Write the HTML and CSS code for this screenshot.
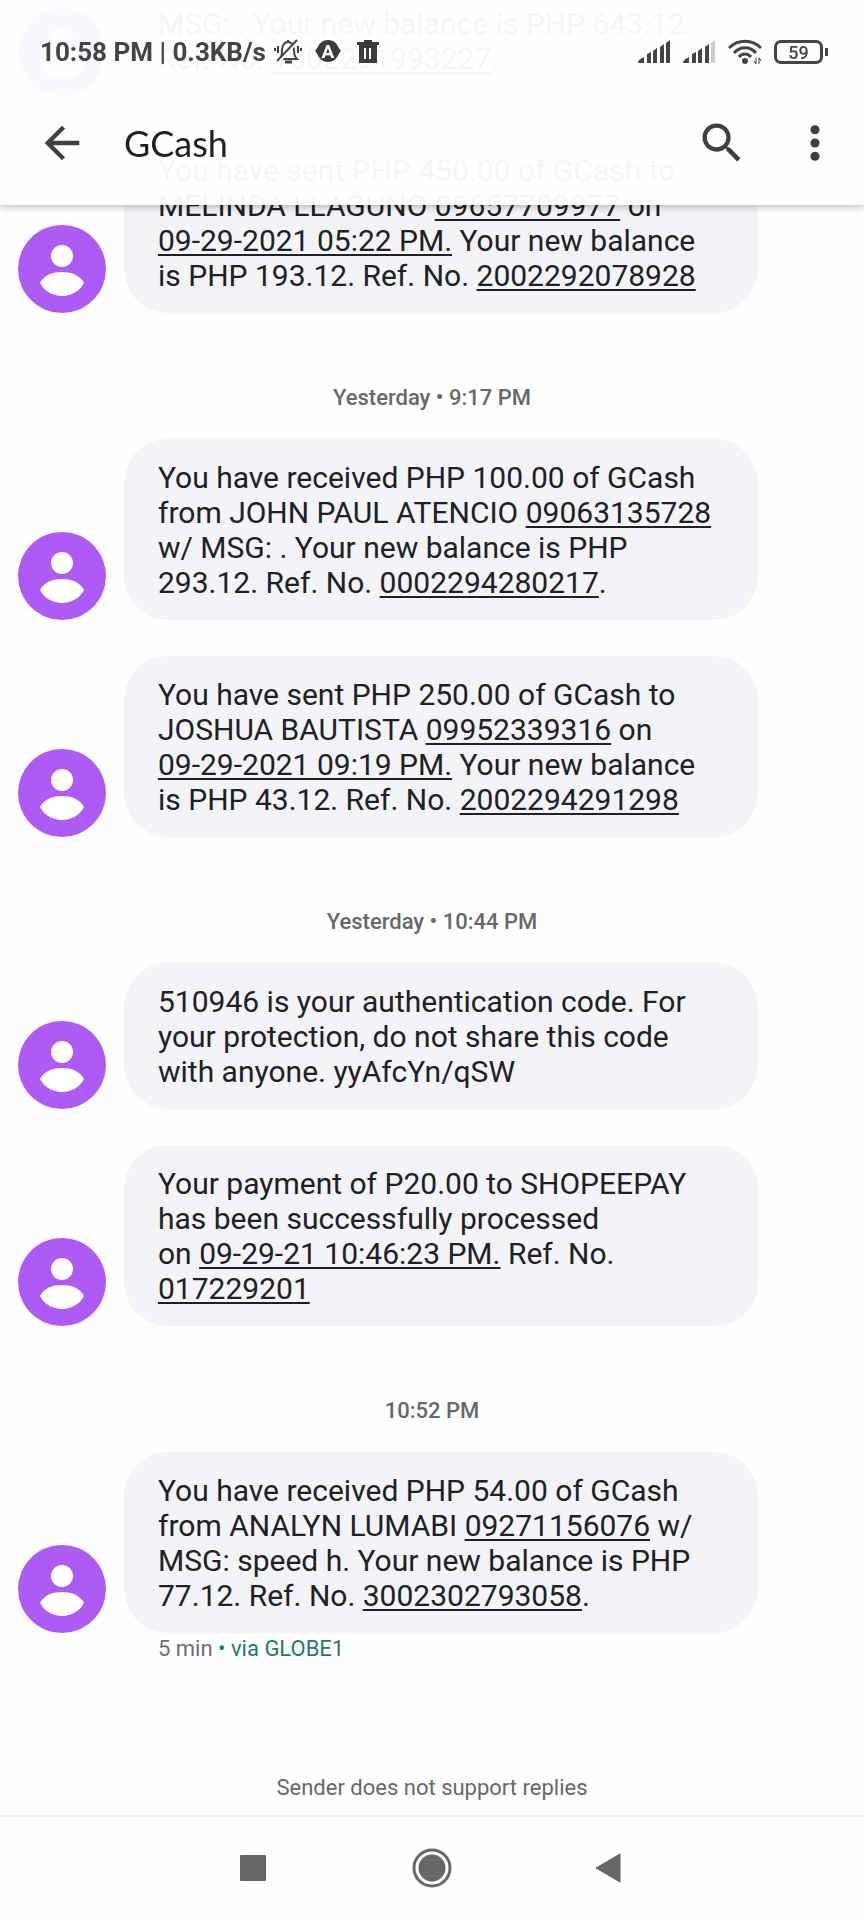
FILE: index.html
```html
<!DOCTYPE html>
<html lang="en">
<head>
  <meta charset="UTF-8">
  <meta name="viewport" content="width=device-width, initial-scale=1">
  <title>GCash</title>
  <link rel="stylesheet" href="styles.css">
</head>
<body>

  <!-- avatar shared by every message -->
  <svg class="sprite" aria-hidden="true">
    <symbol id="avatar" viewBox="0 0 88 88">
      <circle cx="44" cy="44" r="44" fill="#ae5bf5"/>
      <circle cx="44" cy="31" r="11" fill="#fff"/>
      <path d="M22 58 C26 50 35 47 44 47 S62 50 66 58 C62 66 53 71 44 71 S26 66 22 58 Z" fill="#fff"/>
    </symbol>
  </svg>

  <header class="top">
    <div class="status-bar">
      <span class="status-text">10:58 PM | 0.3KB/s</span>
      <div class="status-icons left">
        <svg width="28" height="28" viewBox="0 0 28 28" fill="none" stroke="#444" stroke-width="2">
          <path d="M6 21 C8 19 8 16 8 12 C8 7 11 4 14 4 S20 7 20 12 C20 16 21 19 23 21 Z"/>
          <path d="M14 4 V2"/>
          <path d="M4 24 L24 2" stroke="#fdfdfd" stroke-width="4"/>
          <path d="M3 23 L23 2"/>
          <path d="M11 24 H18" stroke-width="3"/>
          <path d="M4 8 V15 M1 10 V13 M24 8 V15 M27 10 V13"/>
        </svg>
        <svg width="28" height="28" viewBox="0 0 28 28">
          <circle cx="14" cy="13" r="11" fill="#3c3c3c"/>
          <path d="M5 8 L1 13 L5 18 Z M23 8 L27 13 L23 18 Z" fill="#3c3c3c"/>
          <text class="badge-letter" x="14" y="20" text-anchor="middle">A</text>
        </svg>
        <svg width="28" height="28" viewBox="0 0 28 28" fill="#3c3c3c">
          <path d="M3 4 H10 V2 H18 V4 H25 V7 H3 Z"/>
          <path fill-rule="evenodd" d="M5 7 H23 V25 H5 Z M10 10 V21 H12 V10 Z M15 10 V21 H17 V10 Z"/>
        </svg>
      </div>

      <div class="status-icons right">
        <svg width="33" height="24" viewBox="0 0 33 24" fill="#444">
          <path d="M0 23 L1 20 L6 17 V23 Z M9 14 L13 12 V23 H9 Z M15 11 L19 8 V23 H15 Z M22 7 L26 4 V23 H22 Z M28 3 L32 0 V23 H28 Z"/>
        </svg>
        <svg width="33" height="24" viewBox="0 0 33 24" fill="#444">
          <path d="M0 23 L1 20 L6 17 V23 Z M9 14 L13 12 V23 H9 Z M15 11 L19 8 V23 H15 Z M22 7 L26 4 V23 H22 Z"/>
          <path d="M28 3 L32 0 V23 H28 Z" fill="#ccc"/>
        </svg>
        <svg width="34" height="26" viewBox="0 0 34 26" fill="none" stroke="#444" stroke-width="3">
          <path d="M1 9 C10 0 24 0 33 9"/>
          <path d="M6 14 C12 7 22 7 28 14"/>
          <path d="M11 18 C14 14 20 14 23 18"/>
          <circle cx="17" cy="22" r="3" fill="#444" stroke="none"/>
          <path d="M28 19 V25 L26 22 M31 25 V19 L33 22" stroke-width="1"/>
        </svg>
        <div class="battery">59</div>
      </div>
    </div>

    <div class="app-bar">
      <button class="icon-btn" aria-label="Back">
        <svg width="52" height="52" viewBox="0 0 24 24" fill="#3c4043"><path d="M20 11H7.83l5.59-5.59L12 4l-8 8 8 8 1.41-1.41L7.83 13H20v-2z"/></svg>
      </button>
      <h1 class="title">GCash</h1>
      <button class="icon-btn" aria-label="Search">
        <svg width="52" height="52" viewBox="0 0 24 24" fill="#3c4043"><path d="M15.5 14h-.79l-.28-.27C15.41 12.59 16 11.11 16 9.5 16 5.91 13.09 3 9.5 3S3 5.91 3 9.5 5.91 16 9.5 16c1.61 0 3.09-.59 4.23-1.57l.27.28v.79l5 4.99L20.49 19l-4.99-5zm-6 0C7.01 14 5 11.99 5 9.5S7.01 5 9.5 5 14 7.01 14 9.5 11.99 14 9.5 14z"/></svg>
      </button>
      <button class="icon-btn" aria-label="More options">
        <svg width="52" height="52" viewBox="0 0 24 24" fill="#3c4043"><circle cx="12" cy="5.9" r="2.1"/><circle cx="12" cy="12" r="2.1"/><circle cx="12" cy="18.1" r="2.1"/></svg>
      </button>
    </div>
  </header>

  <main class="thread">
    <div class="message">
      <svg class="avatar"><use href="#avatar"/></svg>
      <p class="bubble">MSG: . Your new balance is PHP 643.12.<br>Ref. No. <a href="#">1002291993227</a>.</p>
    </div>

    <div class="message">
      <svg class="avatar"><use href="#avatar"/></svg>
      <p class="bubble">You have sent PHP 450.00 of GCash to<br>MELINDA LLAGUNO <a href="#">09657709977</a> on<br><a href="#">09-29-2021 05:22 PM.</a> Your new balance<br>is PHP 193.12. Ref. No. <a href="#">2002292078928</a></p>
    </div>

    <div class="time">Yesterday • 9:17 PM</div>

    <div class="message">
      <svg class="avatar"><use href="#avatar"/></svg>
      <p class="bubble">You have received PHP 100.00 of GCash<br>from JOHN PAUL ATENCIO <a href="#">09063135728</a><br>w/ MSG: . Your new balance is PHP<br>293.12. Ref. No. <a href="#">0002294280217</a>.</p>
    </div>

    <div class="message">
      <svg class="avatar"><use href="#avatar"/></svg>
      <p class="bubble">You have sent PHP 250.00 of GCash to<br>JOSHUA BAUTISTA <a href="#">09952339316</a> on<br><a href="#">09-29-2021 09:19 PM.</a> Your new balance<br>is PHP 43.12. Ref. No. <a href="#">2002294291298</a></p>
    </div>

    <div class="time">Yesterday • 10:44 PM</div>

    <div class="message">
      <svg class="avatar"><use href="#avatar"/></svg>
      <p class="bubble">510946 is your authentication code. For<br>your protection, do not share this code<br>with anyone. yyAfcYn/qSW</p>
    </div>

    <div class="message">
      <svg class="avatar"><use href="#avatar"/></svg>
      <p class="bubble">Your payment of P20.00 to SHOPEEPAY<br>has been successfully processed<br>on <a href="#">09-29-21 10:46:23 PM.</a> Ref. No.<br><a href="#">017229201</a></p>
    </div>

    <div class="time">10:52 PM</div>

    <div class="message">
      <svg class="avatar"><use href="#avatar"/></svg>
      <p class="bubble">You have received PHP 54.00 of GCash<br>from ANALYN LUMABI <a href="#">09271156076</a> w/<br>MSG: speed h. Your new balance is PHP<br>77.12. Ref. No. <a href="#">3002302793058</a>.</p>
    </div>
    <div class="meta">5 min <span class="sim">• via GLOBE1</span></div>
  </main>

  <p class="notice">Sender does not support replies</p>

  <nav class="nav-bar">
    <button class="nav-btn" aria-label="Recent apps">
      <svg width="40" height="40" viewBox="0 0 40 40"><rect x="7" y="7" width="26" height="26" rx="1" fill="#666"/></svg>
    </button>
    <button class="nav-btn" aria-label="Home">
      <svg width="40" height="40" viewBox="0 0 40 40"><circle cx="20" cy="20" r="18" fill="none" stroke="#666" stroke-width="3"/><circle cx="20" cy="20" r="13.5" fill="#666"/></svg>
    </button>
    <button class="nav-btn" aria-label="Back">
      <svg width="40" height="40" viewBox="0 0 40 40"><path d="M5 20 L29 6 V34 Z" fill="#666" stroke="#666" stroke-linejoin="round"/></svg>
    </button>
  </nav>

</body>
</html>
```
FILE: styles.css
```css
* {
  box-sizing: border-box;
  margin: 0;
  padding: 0;
}

body {
  font-family: Roboto, sans-serif;
  background-color: #fefefe;
  color: #202124;
  display: flex;
  flex-direction: column;
  height: 100vh;
  overflow: hidden;
}

svg {
  display: block;
}

button {
  background: none;
  border: none;
  cursor: pointer;
}

.sprite {
  position: absolute;
  width: 0;
  height: 0;
}

/* header, sits over the scrolled messages */
.top {
  position: fixed;
  top: 0;
  left: 0;
  right: 0;
  z-index: 1;
  background-color: rgba(254, 254, 254, 0.96);
  box-shadow: 0 1px 8px rgba(0, 0, 0, 0.3);
}

.status-bar {
  display: flex;
  align-items: center;
  height: 80px;
  padding: 24px 36px 0 40px;
}

.status-text {
  font-size: 26px;
  font-weight: 700;
  color: #444;
}

.status-icons {
  display: flex;
  align-items: center;
  gap: 12px;
}

.left {
  margin-left: 8px;
}

.right {
  margin-left: auto;
}

.badge-letter {
  font-size: 19px;
  font-weight: 700;
  fill: #fff;
}

.battery {
  position: relative;
  width: 49px;
  height: 24px;
  margin-right: 5px;
  border: 3px solid #444;
  border-radius: 7px;
  font-size: 18px;
  font-weight: 500;
  line-height: 19px;
  text-align: center;
  color: #444;
}

.battery::after {
  content: "";
  position: absolute;
  top: 5px;
  right: -8px;
  width: 3px;
  height: 8px;
  background-color: #444;
}

.app-bar {
  display: flex;
  align-items: center;
  height: 125px;
  padding: 0 23px 0 36px;
}

.title {
  flex: 1;
  margin-left: 36px;
  font-family: Lato, sans-serif;
  font-size: 36px;
  font-weight: 400;
}

.icon-btn + .icon-btn {
  margin-left: 41px;
}

/* conversation, pinned to the newest message */
.thread {
  flex: 1;
  min-height: 0;
  display: flex;
  flex-direction: column;
  justify-content: flex-end;
  overflow: hidden;
  padding-bottom: 114px;
}

.message {
  flex-shrink: 0;
  display: flex;
  align-items: flex-end;
  gap: 18px;
  padding: 0 106px 0 18px;
}

.message + .message {
  margin-top: 36px;
}

.avatar {
  flex-shrink: 0;
  width: 88px;
  height: 88px;
}

.bubble {
  flex: 1;
  padding: 21px 20px 20px 34px;
  border-radius: 44px;
  background-color: #f3f3f8;
  font-size: 30px;
  line-height: 35px;
}

.bubble a {
  color: inherit;
  text-decoration-thickness: 2px;
  text-underline-offset: 3px;
  text-decoration-skip-ink: none;
}

.time {
  flex-shrink: 0;
  margin: 73px 0 29px;
  font-size: 22px;
  font-weight: 500;
  line-height: 24px;
  text-align: center;
  color: #66686b;
}

.meta {
  margin: 4px 0 0 158px;
  font-size: 22px;
  line-height: 24px;
  color: #6b6d70;
}

.sim {
  color: #1f7a68;
}

.notice {
  padding-bottom: 14px;
  font-size: 22px;
  line-height: 26px;
  text-align: center;
  color: #66686b;
}

.nav-bar {
  display: flex;
  height: 105px;
  padding: 0 19% 2px;
  border-top: 2px solid #f0f0f0;
}

.nav-btn {
  flex: 1;
  display: flex;
  align-items: center;
  justify-content: center;
}
```
